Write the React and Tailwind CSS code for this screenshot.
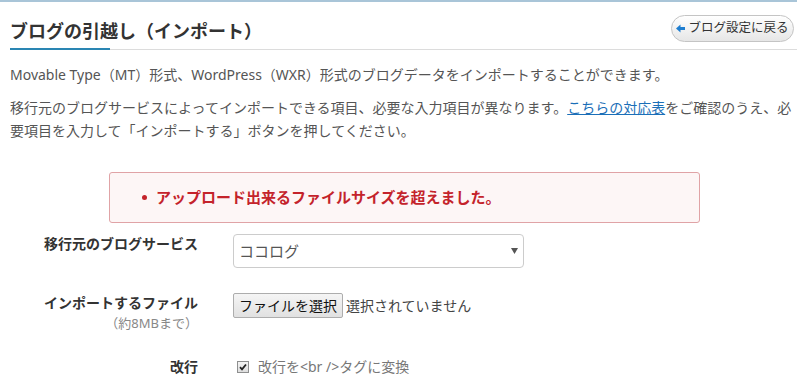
import React from "react";

const font = { fontFamily: '"Noto Sans", "Noto Sans CJK JP", sans-serif' };

function BackArrow() {
  return (
    <svg width="9" height="9" viewBox="0 0 9 9" className="shrink-0">
      <polygon points="0,4.5 4.5,0.5 4.5,3 9,3 9,6 4.5,6 4.5,8.5" fill="#1f7ed0" />
    </svg>
  );
}

function CheckMark() {
  return (
    <span className="flex h-[12px] w-[12px] items-center justify-center border border-[#8e8f8f] bg-gradient-to-b from-[#f4f4f4] to-[#dedede]">
      <svg width="8" height="8" viewBox="0 0 8 8">
        <path d="M1 4.2 L3 6.3 L7 1.5" stroke="#222" strokeWidth="1.8" fill="none" />
      </svg>
    </span>
  );
}

export default function App() {
  return (
    <div className="min-h-screen bg-white" style={font}>
      <div className="w-[797px] border-t-2 border-[#a9c5d8]">
        <div className="pl-[10px]">
          {/* Header */}
          <div className="flex h-[46px] items-start justify-between">
            <h2 className="mt-[20px] text-[18px] font-bold leading-[18px] text-[#333]">
              ブログの引越し（インポート）
            </h2>
            <button className="mr-[3px] mt-[13px] flex h-[27px] w-[123px] items-center justify-center gap-[3px] rounded-full border border-[#c4c4c4] bg-gradient-to-b from-white to-[#e6e6e6] text-[12.5px] text-[#333]">
              <BackArrow />
              ブログ設定に戻る
            </button>
          </div>
          <div className="flex items-end">
            <div className="h-[2px] w-[100px] bg-[#2a86b3]" />
            <div className="h-px flex-1 bg-[#dcdcdc]" />
          </div>

          {/* Description */}
          <p className="mt-[13px] text-[14px] leading-[23px] text-[#555]">
            Movable Type（MT）形式、WordPress（WXR）形式のブログデータをインポートすることができます。
          </p>
          <p className="mt-[10px] text-[14px] leading-[23px] text-[#555]">
            移行元のブログサービスによってインポートできる項目、必要な入力項目が異なります。
            <a href="#" className="text-[#1b6fb8] underline">こちらの対応表</a>
            をご確認のうえ、必要項目を入力して「インポートする」ボタンを押してください。
          </p>

          {/* Error */}
          <div className="ml-[99px] mt-[30px] flex h-[51px] w-[591px] items-center rounded-[3px] border border-[#e0a3a6] bg-[#fdf6f6] pl-[32px]">
            <span className="h-[5px] w-[5px] rounded-full bg-[#c4232b]" />
            <span className="ml-[9px] text-[15px] font-bold text-[#c4232b]">
              アップロード出来るファイルサイズを超えました。
            </span>
          </div>

          {/* Form */}
          <div className="mt-[11px] grid grid-cols-[188px_1fr] gap-x-[35px] gap-y-[25px]">
            <div className="text-right text-[14px] font-bold leading-[20px] text-[#333]">
              移行元のブログサービス
            </div>
            <div>
              <div className="flex h-[34px] w-[291px] items-center justify-between rounded-[4px] border border-[#ccc] bg-white pl-[5px] pr-[5px]">
                <span className="text-[15px] text-[#555]">ココログ</span>
                <svg width="7" height="6" viewBox="0 0 7 6">
                  <polygon points="0,0 7,0 3.5,6" fill="#555" />
                </svg>
              </div>
            </div>

            <div className="text-right leading-[20px]">
              <div className="text-[14px] font-bold text-[#333]">インポートするファイル</div>
              <div className="text-[13px] text-[#888]">（約8MBまで）</div>
            </div>
            <div className="flex items-start">
              <button className="h-[25px] w-[110px] rounded-[2px] border border-[#adadad] bg-gradient-to-b from-[#f5f5f5] to-[#e1e1e1] text-[14px] leading-[23px] text-[#111]">
                ファイルを選択
              </button>
              <span className="ml-[3px] text-[14px] leading-[25px] text-[#444]">選択されていません</span>
            </div>

            <div className="-mt-[1px] text-right text-[14px] font-bold leading-[20px] text-[#333]">改行</div>
            <div className="-mt-[1px] flex items-center gap-[9px] pl-[4px] leading-[20px]">
              <CheckMark />
              <span className="text-[14px] text-[#777]">改行を&lt;br /&gt;タグに変換</span>
            </div>
          </div>
        </div>
      </div>
    </div>
  );
}
